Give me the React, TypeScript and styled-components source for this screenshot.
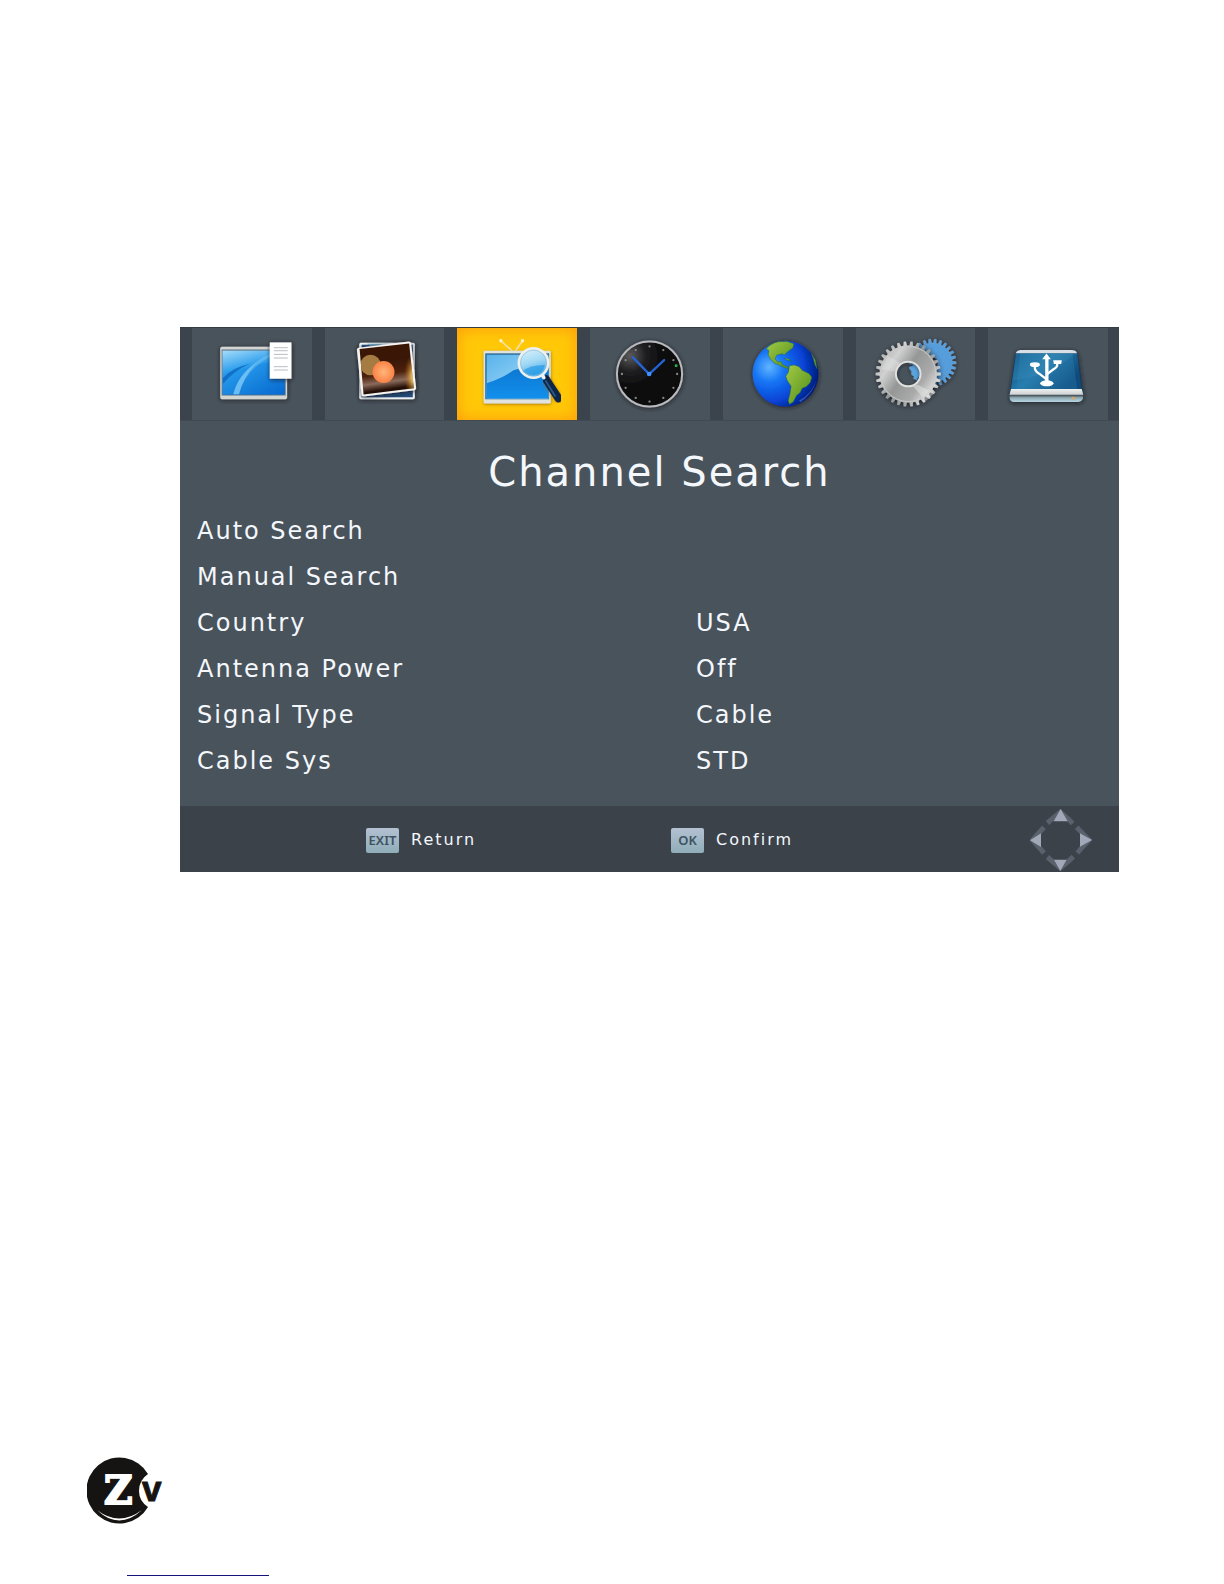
import React, { useState } from 'react';
import styled, { createGlobalStyle } from 'styled-components';

const GlobalStyle = createGlobalStyle`
  *, *::before, *::after { box-sizing: border-box; }
  body {
    margin: 0;
    background: #fff;
    font-family: "DejaVu Sans", Verdana, sans-serif;
  }
  button { font: inherit; color: inherit; letter-spacing: inherit; cursor: pointer; }
`;

const Page = styled.div`
  display: flex;
  flex-direction: column;
  justify-content: space-between;
  min-height: 100vh;
  padding: 327px 105px 8px 87px;
`;

const Menu = styled.main`
  margin-left: 93px;
  background: #49535b;
  color: #f4f7fc;
`;

const TabBar = styled.nav`
  display: grid;
  grid-template-columns: repeat(7, 1fr);
  column-gap: 13px;
  padding: 0 11px 0 12px;
  background: #3b444c;
  border-top: 1px solid #333b43;
  border-bottom: 1px solid #414a52;
`;

const Tab = styled.button<{ $active: boolean }>`
  display: block;
  height: 92px;
  padding: 0;
  border: 0;
  background: ${(p) => (p.$active ? '#ffc908' : '#49535b')};
  box-shadow: ${(p) => (p.$active ? 'inset 0 0 16px #ff980c' : 'none')};

  svg { display: block; width: 100%; height: 100%; }
`;

const Body = styled.section`
  padding: 21px 17px 22px;
  letter-spacing: 2px;
`;

const Title = styled.h1`
  margin: 0 0 6px;
  padding-left: 20px;
  font-size: 40px;
  font-weight: 400;
  line-height: 60px;
  text-align: center;
`;

const Options = styled.ul`
  margin: 0;
  padding: 0;
  list-style: none;
`;

const Option = styled.button`
  display: grid;
  grid-template-columns: 499fr 406fr;
  width: 100%;
  padding: 0;
  border: 0;
  background: none;
  font-size: 24px;
  line-height: 46px;
  text-align: left;
`;

const Hints = styled.footer`
  display: grid;
  grid-template-columns: 305fr 359fr auto;
  align-items: center;
  height: 66px;
  padding: 2px 27px 0 186px;
  background: #3b424a;
  letter-spacing: 2px;
`;

const Hint = styled.button`
  display: flex;
  align-items: center;
  gap: 12px;
  padding: 0;
  border: 0;
  background: none;
  font-size: 16px;
  line-height: 24px;
`;

const Key = styled.kbd`
  width: 33px;
  height: 25px;
  border-radius: 2px;
  background: linear-gradient(#b4c1d2, #8fadb8);
  color: #3d5262;
  font: 600 13px/25px "Noto Sans", sans-serif;
  letter-spacing: 0;
  text-align: center;
`;

const Arrows = styled.svg`
  display: block;
  width: 62px;
  height: 62px;
`;

const PageFoot = styled.footer`
  display: flex;
  flex-direction: column;
  gap: 50px;
`;

const Logo = styled.svg`
  display: block;
  width: 76px;
  height: 68px;
`;

const Rule = styled.hr`
  width: 142px;
  margin: 0 0 0 40px;
  border: 0;
  border-top: 1px solid #14147c;
`;

function gear(cx: number, cy: number, outer: number, inner: number, teeth: number, hole: number) {
  const step = (Math.PI * 2) / teeth;
  const at = (r: number, a: number) =>
    `${(cx + r * Math.cos(a)).toFixed(1)} ${(cy + r * Math.sin(a)).toFixed(1)}`;
  let d = '';
  for (let i = 0; i < teeth; i++) {
    const a = i * step;
    d += `${i ? 'L' : 'M'}${at(inner, a - step * 0.3)}L${at(outer, a - step * 0.17)}`;
    d += `L${at(outer, a + step * 0.17)}L${at(inner, a + step * 0.3)}`;
  }
  return `${d}ZM${cx + hole} ${cy}A${hole} ${hole} 0 1 0 ${cx - hole} ${cy}A${hole} ${hole} 0 1 0 ${cx + hole} ${cy}Z`;
}

const Shadow = ({ id }: { id: string }) => (
  <filter id={id} x="-20%" y="-20%" width="140%" height="140%">
    <feDropShadow dx="1" dy="3" stdDeviation="6" floodColor="#15191d" floodOpacity="0.85" />
  </filter>
);

const ProgramIcon = () => (
  <svg viewBox="66 36 360 276" aria-hidden="true">
    <defs>
      <Shadow id="s1" />
      <linearGradient id="sky" x1="0" y1="0" x2="0.4" y2="1">
        <stop offset="0" stopColor="#a4dcfa" />
        <stop offset="0.45" stopColor="#2b9dec" />
        <stop offset="1" stopColor="#0967c4" />
      </linearGradient>
      <linearGradient id="wave" x1="0" y1="0" x2="1" y2="1">
        <stop offset="0" stopColor="#2fa8f2" />
        <stop offset="1" stopColor="#0668cf" />
      </linearGradient>
      <clipPath id="screen1"><rect x="158" y="104" width="187" height="132" /></clipPath>
    </defs>
    <rect x="151" y="92" width="201" height="158" rx="5" fill="#d3d5d3" filter="url(#s1)" />
    <rect x="155" y="100" width="193" height="139" fill="#6b8292" />
    <rect x="158" y="104" width="187" height="132" fill="url(#sky)" />
    <g clipPath="url(#screen1)">
      <path d="M158 190Q220 142 345 134V236H158Z" fill="url(#wave)" />
      <path d="M158 187Q185 155 240 143Q190 165 158 205Z" fill="#0b63bd" opacity="0.75" />
      <path d="M190 236Q203 177 265 137Q222 178 207 236Z" fill="#70c8fb" opacity="0.65" />
      <path d="M207 236Q223 165 302 121V112Q208 157 190 236Z" fill="#a5dcfa" opacity="0.3" />
    </g>
    <rect x="300" y="79" width="65" height="109" fill="#fff" filter="url(#s1)" />
    <g stroke="#b7bec3" strokeWidth="3">
      <path d="M312 95H354M312 104H354M312 115H354M312 126H354M312 152H354M312 162H354" />
    </g>
  </svg>
);

const PictureIcon = () => (
  <svg viewBox="464 36 360 276" aria-hidden="true">
    <defs>
      <Shadow id="s2" />
      <linearGradient id="photo" x1="0.35" y1="0" x2="0.5" y2="1">
        <stop offset="0" stopColor="#3b1504" />
        <stop offset="0.35" stopColor="#391707" />
        <stop offset="0.6" stopColor="#4c210c" />
        <stop offset="0.76" stopColor="#8a6b5b" />
        <stop offset="0.9" stopColor="#261007" />
        <stop offset="1" stopColor="#120603" />
      </linearGradient>
      <radialGradient id="flare">
        <stop offset="0" stopColor="#fff2b8" />
        <stop offset="0.35" stopColor="#e5b653" stopOpacity="0.8" />
        <stop offset="1" stopColor="#a95a10" stopOpacity="0" />
      </radialGradient>
      <radialGradient id="lamp">
        <stop offset="0" stopColor="#ffb679" />
        <stop offset="1" stopColor="#fb8147" />
      </radialGradient>
      <clipPath id="frame2"><path d="M568 99L717 82L731 217L580 236Z" /></clipPath>
    </defs>
    <rect x="567" y="80" width="167" height="170" rx="5" fill="#eef2f4" filter="url(#s2)" />
    <rect x="574" y="86" width="154" height="158" fill="#264e7e" />
    <path d="M590 83H650L600 90Z" fill="#79aac4" />
    <path d="M565 95L716 76Q722 76 723 81L738 216Q738 222 733 223L580 242Q575 242 574 237L560 101Q560 96 565 95Z" fill="#f5f3f0" filter="url(#s2)" />
    <path d="M568 99L717 82L731 217L580 236Z" fill="url(#photo)" />
    <g clipPath="url(#frame2)">
      <ellipse cx="733" cy="180" rx="32" ry="68" fill="url(#flare)" />
      <circle cx="601" cy="147" r="31" fill="#b08648" opacity="0.9" />
    </g>
    <circle cx="640" cy="168" r="33" fill="url(#lamp)" />
  </svg>
);

const SearchIcon = () => (
  <svg viewBox="52 36 360 276" aria-hidden="true">
    <defs>
      <filter id="s3" x="-20%" y="-20%" width="140%" height="140%">
        <feDropShadow dx="1" dy="3" stdDeviation="4" floodColor="#8a5c00" floodOpacity="0.7" />
      </filter>
      <linearGradient id="pane" x1="0" y1="0" x2="1" y2="1">
        <stop offset="0" stopColor="#58b3ec" />
        <stop offset="1" stopColor="#b7e2fa" />
      </linearGradient>
      <linearGradient id="deep" x1="0" y1="0" x2="0" y2="1">
        <stop offset="0" stopColor="#0c74ce" />
        <stop offset="1" stopColor="#1290ec" />
      </linearGradient>
      <linearGradient id="lens" x1="0" y1="0" x2="0.3" y2="1">
        <stop offset="0" stopColor="#e3f4fb" />
        <stop offset="0.55" stopColor="#a1d9f5" />
        <stop offset="1" stopColor="#41a8ea" />
      </linearGradient>
    </defs>
    <g stroke="#f6e0a6" strokeWidth="5" strokeLinecap="round">
      <path d="M217 104L184 74M228 104L249 74" />
    </g>
    <circle cx="184" cy="74" r="5" fill="#fff1ce" />
    <circle cx="249" cy="74" r="5" fill="#fff1ce" />
    <rect x="132" y="104" width="202" height="159" rx="4" fill="#dfe2dd" filter="url(#s3)" />
    <rect x="137" y="112" width="192" height="138" fill="#27658f" />
    <rect x="141" y="116" width="186" height="132" fill="url(#pane)" />
    <path d="M141 202Q190 185 222 163Q260 150 327 143V248H141Z" fill="url(#deep)" />
    <path d="M320 190L357 247" stroke="#0b2747" strokeWidth="24" strokeLinecap="round" filter="url(#s3)" />
    <path d="M319 195L347 240" stroke="#2a5b8f" strokeWidth="5" strokeLinecap="round" />
    <path d="M303 168L313 185" stroke="#eef2f4" strokeWidth="11" strokeLinecap="round" />
    <circle cx="282" cy="141" r="44" fill="url(#lens)" stroke="#edf0ee" strokeWidth="8" />
    <path d="M248 165Q275 146 316 147Q312 174 282 176Q260 177 248 165Z" fill="#2298e5" opacity="0.65" />
    <circle cx="282" cy="141" r="39" fill="none" stroke="#8ebbd0" strokeWidth="2" />
  </svg>
);

const ClockIcon = () => (
  <svg viewBox="450 36 360 276" aria-hidden="true">
    <defs>
      <Shadow id="s4" />
      <radialGradient id="gloss" cx="0.2" cy="0.22" r="0.5">
        <stop offset="0" stopColor="#5a5a5c" />
        <stop offset="0.5" stopColor="#1e1e20" />
        <stop offset="1" stopColor="#0b0b0c" />
      </radialGradient>
    </defs>
    <circle cx="629" cy="174" r="98" fill="url(#gloss)" stroke="#b9babd" strokeWidth="6" filter="url(#s4)" />
    {Array.from({ length: 12 }, (_, i) => {
      const a = (i * Math.PI) / 6;
      return <circle key={i} cx={629 + 83 * Math.cos(a)} cy={174 + 83 * Math.sin(a)} r="3.5" fill="#858889" />;
    })}
    <circle cx="709" cy="149" r="4.5" fill="#2bb34a" />
    <path d="M579 124L628 174L673 132" fill="none" stroke="#2663d3" strokeWidth="7" strokeLinecap="round" />
    <circle cx="628" cy="174" r="7" fill="#3f91ff" />
  </svg>
);

const GlobeIcon = () => (
  <svg viewBox="38 36 360 276" aria-hidden="true">
    <defs>
      <Shadow id="s5" />
      <radialGradient id="sea" cx="0.25" cy="0.4" r="0.78">
        <stop offset="0" stopColor="#60b5ff" />
        <stop offset="0.3" stopColor="#1675f5" />
        <stop offset="0.68" stopColor="#0742d4" />
        <stop offset="1" stopColor="#031a73" />
      </radialGradient>
      <linearGradient id="land" x1="0" y1="0" x2="1" y2="1">
        <stop offset="0" stopColor="#a3ca45" />
        <stop offset="1" stopColor="#4c8c19" />
      </linearGradient>
    </defs>
    <circle cx="226" cy="173" r="99" fill="url(#sea)" filter="url(#s5)" />
    <g fill="url(#land)" stroke="#2c6a3a" strokeWidth="1.5">
      <path d="M168 99Q178 84 204 77L231 76L251 83L248 96L233 106L222 117L216 113L200 117L194 128L203 138L214 137L215 145L229 151L238 159L226 156L211 149L194 142L181 130L174 116L176 103Z" />
      <path d="M238 149L252 147L267 152L276 163L297 173L305 184L300 200L288 212L276 217L270 230L259 239L249 258L238 265L234 254L239 236L243 211L232 195L227 181L235 168Z" />
      <path d="M304 114L316 133L321 158L315 148L310 129Z" />
      <path d="M222 127L236 129L243 135L230 132Z" />
    </g>
    <path d="M267 254Q304 234 318 194Q309 232 270 259Z" fill="#4e77ca" opacity="0.6" />
  </svg>
);

const GearIcon = () => (
  <svg viewBox="436 36 360 276" aria-hidden="true">
    <defs>
      <Shadow id="s6" />
      <linearGradient id="steel" x1="0" y1="0.15" x2="1" y2="0.85">
        <stop offset="0" stopColor="#a6a8a7" />
        <stop offset="0.25" stopColor="#d0d1d0" />
        <stop offset="0.46" stopColor="#959796" />
        <stop offset="0.7" stopColor="#a9aaa9" />
        <stop offset="0.85" stopColor="#d6d7d6" />
        <stop offset="1" stopColor="#989a99" />
      </linearGradient>
    </defs>
    <path d={gear(666, 140, 71, 59, 26, 17)} fill="#579ddb" fillRule="evenodd" stroke="#8bbce6" strokeWidth="1" filter="url(#s6)" />
    <path d="M600 150L610 154L612 144L619 151L621 196L614 190L608 190L610 181L602 177L608 170L600 165Z" fill="#5ca3dc" />
    <path d={gear(593, 174, 98, 86, 30, 37)} fill="url(#steel)" fillRule="evenodd" filter="url(#s6)" />
    <path d="M608 211L622 206L671 232L646 255Z" fill="#e6e7e6" opacity="0.5" />
    <path d="M532 119L570 142L551 166L512 160Z" fill="#ededed" opacity="0.3" />
    <circle cx="593" cy="174" r="83" fill="none" stroke="#c9cbca" strokeWidth="3" />
    <circle cx="593" cy="174" r="37" fill="none" stroke="#dfe1df" strokeWidth="6" />
  </svg>
);

const UsbIcon = () => (
  <svg viewBox="84 36 360 276" aria-hidden="true">
    <defs>
      <Shadow id="s7" />
      <linearGradient id="drive" x1="0" y1="0" x2="1" y2="0.5">
        <stop offset="0" stopColor="#0d5184" />
        <stop offset="0.5" stopColor="#2679a9" />
        <stop offset="1" stopColor="#104a7c" />
      </linearGradient>
      <linearGradient id="rim" x1="0" y1="0" x2="0" y2="1">
        <stop offset="0" stopColor="#eef0f0" />
        <stop offset="0.4" stopColor="#d0d3d4" />
        <stop offset="0.5" stopColor="#4c565c" />
        <stop offset="0.68" stopColor="#8fabb6" />
        <stop offset="1" stopColor="#b7d6e1" />
      </linearGradient>
    </defs>
    <path d="M181 102H336Q350 102 354 116L370 232V246Q367 257 356 258H160Q150 256 149 246V230L166 116Q169 103 181 102Z" fill="#123b5b" filter="url(#s7)" />
    <path d="M181 102H336Q348 102 352 112H167Q170 103 181 102Z" fill="#d9dfe4" />
    <path d="M168 112H352L365 219H153Z" fill="url(#drive)" />
    <path d="M181 112H338L352 219H169Z" fill="#2c88b9" opacity="0.3" />
    <path d="M168 112H345Q275 180 158 193Z" fill="#4f9fc8" opacity="0.18" />
    <path d="M153 219H366L370 235V246Q367 257 356 258H160Q150 256 149 246V235Z" fill="url(#rim)" />
    <circle cx="340" cy="247" r="4.5" fill="#dea35b" />
    <g fill="none" stroke="#fff" strokeWidth="7">
      <path d="M261 124V200" strokeWidth="10" />
      <path d="M225 147V158Q226 166 238 173L259 189" />
      <path d="M292 140V148Q292 154 281 160L262 174" />
    </g>
    <g fill="#fff">
      <path d="M260 112L273 130H247Z" />
      <ellipse cx="225" cy="146" rx="15" ry="7" />
      <path d="M280 133H306L304 144H282Z" />
      <ellipse cx="261" cy="202" rx="20" ry="9" />
    </g>
  </svg>
);

const tabs = [
  { name: 'Program', Icon: ProgramIcon },
  { name: 'Picture', Icon: PictureIcon },
  { name: 'Channel Search', Icon: SearchIcon },
  { name: 'Time', Icon: ClockIcon },
  { name: 'Language', Icon: GlobeIcon },
  { name: 'System', Icon: GearIcon },
  { name: 'USB', Icon: UsbIcon },
];

const options = [
  { label: 'Auto Search' },
  { label: 'Manual Search' },
  { label: 'Country', value: 'USA' },
  { label: 'Antenna Power', value: 'Off' },
  { label: 'Signal Type', value: 'Cable' },
  { label: 'Cable Sys', value: 'STD' },
];

export default function App() {
  const [active, setActive] = useState(2);

  return (
    <>
      <GlobalStyle />
      <Page>
        <Menu>
          <TabBar>
            {tabs.map(({ name, Icon }, i) => (
              <Tab key={name} type="button" aria-label={name} $active={i === active} onClick={() => setActive(i)}>
                <Icon />
              </Tab>
            ))}
          </TabBar>
          <Body>
            <Title>Channel Search</Title>
            <Options>
              {options.map(({ label, value }) => (
                <li key={label}>
                  <Option type="button">
                    <span>{label}</span>
                    {value && <span>{value}</span>}
                  </Option>
                </li>
              ))}
            </Options>
          </Body>
          <Hints>
            <Hint type="button"><Key>EXIT</Key>Return</Hint>
            <Hint type="button"><Key>OK</Key>Confirm</Hint>
            <Arrows viewBox="90 57 186 186" role="img" aria-label="Arrow keys">
              <g fill="none" stroke="#59616d" strokeWidth="15">
                <path d="M142 99L158 85L181 67L205 87L218 101" />
                <path d="M142 201L158 215L181 234L205 214L220 200" />
                <path d="M132 112L117 128L98 150L115 170L132 189" />
                <path d="M230 112L246 128L267 150L248 170L232 189" />
              </g>
              <g fill="#a1a8b8">
                <path d="M182 57L203 94H161Z" />
                <path d="M181 243L200 209H162Z" />
                <path d="M90 151L123 130V171Z" />
                <path d="M276 150L240 130V170Z" />
              </g>
            </Arrows>
          </Hints>
        </Menu>
        <PageFoot>
          <Logo viewBox="0 0 76 68" role="img" aria-label="ZV logo">
            <path d="M61 17A33 33 0 1 0 61 50Q52 44 52 34Q52 23 61 17Z" fill="#161412" />
            <path d="M10 53Q32 74 55 53Q32 70 10 53Z" fill="#fff" />
            <text x="17" y="47" fill="#fff" stroke="#fff" strokeWidth="2" fontFamily="DejaVu Serif" fontWeight="700" fontSize="39">Z</text>
            <text x="55" y="44" fill="#161412" stroke="#161412" strokeWidth="1" fontFamily="Liberation Sans" fontWeight="700" fontSize="35">v</text>
          </Logo>
          <Rule />
        </PageFoot>
      </Page>
    </>
  );
}
